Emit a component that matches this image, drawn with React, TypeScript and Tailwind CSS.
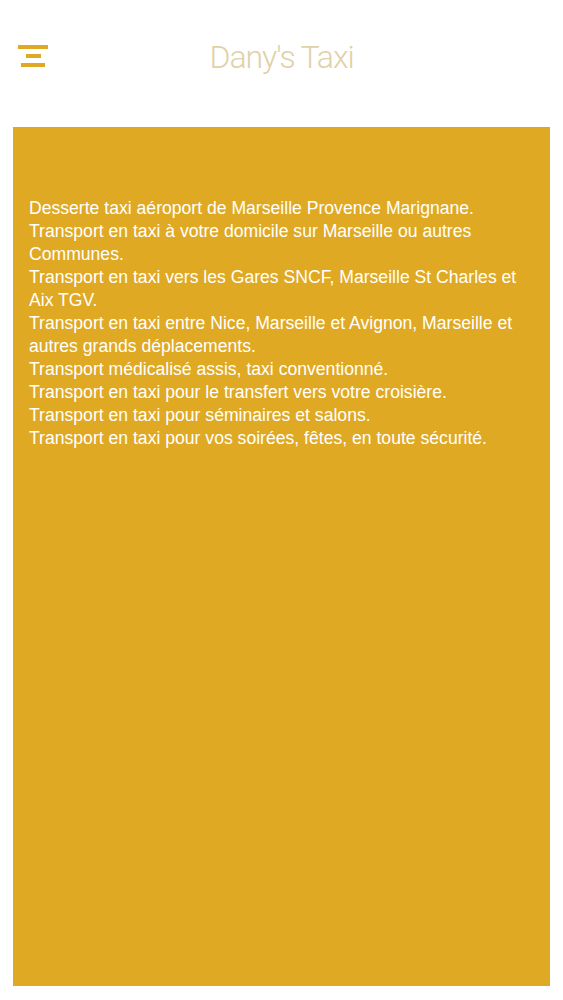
export default function App() {
  const lines = [
    "Desserte taxi aéroport de Marseille Provence Marignane.",
    "Transport en taxi à votre domicile sur Marseille ou autres Communes.",
    "Transport en taxi vers les Gares SNCF, Marseille St Charles et Aix TGV.",
    "Transport en taxi entre Nice, Marseille et Avignon, Marseille et autres grands déplacements.",
    "Transport médicalisé assis, taxi conventionné.",
    "Transport en taxi pour le transfert vers votre croisière.",
    "Transport en taxi pour séminaires et salons.",
    "Transport en taxi pour vos soirées, fêtes, en toute sécurité.",
  ];

  return (
    <div className="flex h-[1000px] w-[563px] flex-col bg-white font-['Liberation_Sans',Arial,sans-serif]">
      {/* Header */}
      <header className="relative flex h-[90px] shrink-0 items-start justify-center pt-[41px]">
        <button className="absolute left-[18px] top-[45px] flex w-[30px] flex-col items-center gap-[5px]" aria-label="menu">
          <span className="block h-[4px] w-[30px] bg-[#e0a923]" />
          <span className="block h-[4px] w-[15px] bg-[#e0a923]" />
          <span className="block h-[4px] w-[24px] bg-[#e0a923]" />
        </button>
        <h1 className="font-['Roboto','Lato',sans-serif] text-[32px] font-light leading-none tracking-[-1.1px] text-[#e0d1a8]">
          Dany's Taxi
        </h1>
      </header>

      {/* Content */}
      <main className="mx-[13px] mt-[37px] mb-[14px] flex-1 bg-[#e0a923] pl-4 pr-3 pt-[70px]">
        <div className="text-[17.6px] leading-[23px] text-white">
          {lines.map((l) => (
            <p key={l}>{l}</p>
          ))}
        </div>
      </main>
    </div>
  );
}
